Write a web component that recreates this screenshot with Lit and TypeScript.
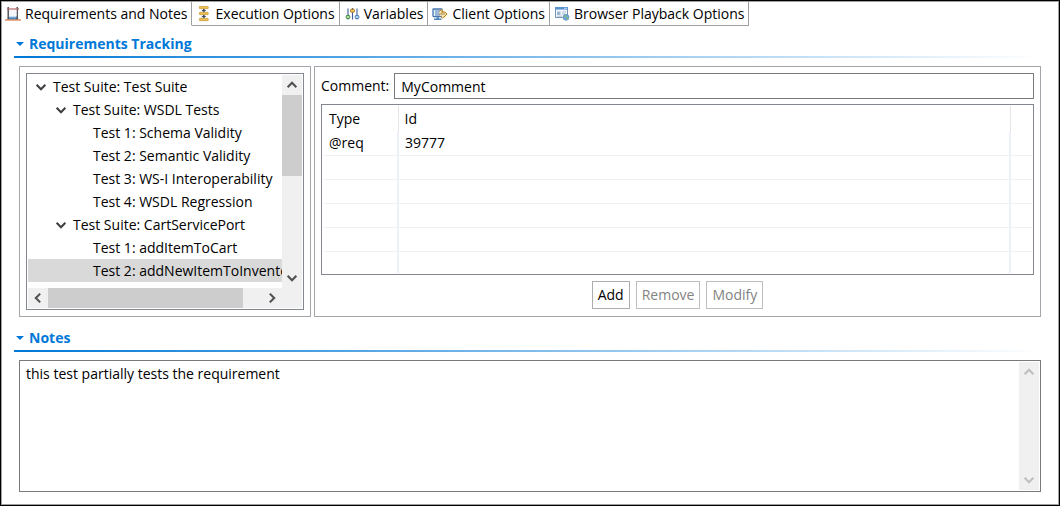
import { LitElement, html, css, svg } from "lit";
import { customElement, property, state } from "lit/decorators.js";
import { classMap } from "lit/directives/class-map.js";

const icons = {
  requirements: svg`
    <path d="M1.5 13.5l3-3h7l3 3z" fill="#8fbce4"/><path d="M4 11.5h8v2H4z" fill="#4f86c0"/>
    <path d="M3.2 1v12.5M12.2 1v12.5" stroke="#4b4650" stroke-width="1.4"/>
    <path d="M4 4h7.500v6H4z" fill="#f4f6fa"/>
    <path d="M2 3h12" stroke="#a9666a" stroke-width="1.3"/><path d="M4.500 3h7" stroke="#e8b0b0" stroke-width="1.3" stroke-dasharray="1 1"/>
    <path d="M0 14h16" stroke="#d9763a" stroke-width="1.2"/>`,
  execution: svg`
    <g fill="#f0c050" stroke="#b98a2a" stroke-width=".6"><rect x="3.300" y="0.300" width="9" height="2.400" rx=".8"/><rect x="3.300" y="6.300" width="9" height="2.400" rx=".8"/><rect x="3.300" y="12.300" width="9" height="2.400" rx=".8"/></g>
    <path d="M7 3h1.600v1h1.700L7.800 6.300 5.300 4H7zM7 9h1.600v1h1.700L7.800 12.300 5.300 10H7z" fill="#3d4d66"/>`,
  variables: svg`
    <path d="M4 2.5v11M8.500 2v11.500M13 2.500v11" stroke="#3c5f9c" stroke-width="1.100"/>
    <rect x="2.200" y="9.500" width="3.600" height="3" rx="1" fill="#b5dfa0" stroke="#34803c"/>
    <rect x="6.600" y="3.200" width="3.800" height="3" rx="1" fill="#f5cf70" stroke="#a96f13"/>
    <rect x="11.200" y="9.500" width="3.600" height="3" rx="1" fill="#b9d8f5" stroke="#3b70ad"/>`,
  client: svg`
    <rect x="1" y="3" width="9" height="7.600" rx=".5" fill="#dcecfa" stroke="#4676ad" stroke-width="1.300"/>
    <path d="M3 5h5M3 7h4M3 9h5" stroke="#39699f" stroke-width=".8"/><path d="M4.500 11.300h2.500v1.200H4.500zM2 12.500h7.500v1.500H2z" fill="#5085bd"/>
    <path d="M7 5.800l2.500-2 3 2 3 .5-2 1.700 2 1.700-2.500 2-3.500-.4.500-1.500-2.500-.8 1.500-1.500z" fill="#fbecc0"/>
    <path d="M7 5.500l2.500-2 1.500 2.500M9 6l4 .2 2 1.800-2.200 2M6.800 8h6M8.500 10.500l2 1.500 2.500-1.800" stroke="#b37a20" stroke-width="1"/>`,
  browser: svg`
    <rect x="1.500" y="1.500" width="12" height="10" fill="#f4f9fe" stroke="#7795b5"/>
    <path d="M1 1h13v2.600H1z" fill="#5a92cd"/><path d="M10 2.300h3" stroke="#d5e8fa" stroke-width=".8"/>
    <path d="M3 5.500h3.500v3.500H3z" fill="#9fb7cf"/><path d="M8 6h4M8 8h3M3 10.200h5" stroke="#9db1c6" stroke-width=".8"/>
    <circle cx="12" cy="11.300" r="3" fill="#6aa6dd" stroke="#5b8ab5" stroke-width=".6"/>
    <path d="M9.700 10.500l1.500-1.600 1.600.6-1 1.600-1.400.3zM12.300 11.800l1.800-.9.500 1.400-1.400 1.500z" fill="#86bd70"/>`,
};

const chevronPaths = {
  up: "M3 10.5 8 5.5l5 5",
  down: "M3 5.5l5 5 5-5",
  left: "M10.5 3l-5 5 5 5",
  right: "M5.5 3l5 5-5 5",
};
type Direction = keyof typeof chevronPaths;
const chevron = (dir: Direction) => html`<svg class="chevron" width="14" height="14" viewBox="0 0 16 16" aria-hidden="true"><path d=${chevronPaths[dir]} fill="none" stroke="currentColor" stroke-width="2.4"/></svg>`;

const base = css`
  * { box-sizing: border-box; }
  button, input, textarea { font: inherit; color: inherit; margin: 0; border-radius: 0; }
  svg { display: block; flex: none; }
`;

@customElement("scroll-bar")
class ScrollBar extends LitElement {
  @property({ type: Boolean, reflect: true }) horizontal = false;
  @property({ type: Boolean, reflect: true }) disabled = false;
  @property({ type: Number }) thumb = 0;
  static styles = [base, css`
    :host { display: flex; flex-direction: column; width: 20px; background: #f0f0f0; color: #505050; }
    :host([horizontal]) { flex-direction: row; width: auto; height: 20px; padding-right: 20px; }
    :host([disabled]) { color: #bfbfbf; }
    button { flex: none; width: 20px; height: 20px; padding: 0; border: 0; background: none; display: grid; place-items: center; }
    .track { flex: 1; display: flex; flex-direction: inherit; }
    .thumb { background: #cdcdcd; }
  `];
  render() {
    const [a, b]: Direction[] = this.horizontal ? ["left", "right"] : ["up", "down"];
    return html`
      <button aria-label="Scroll ${a}" ?disabled=${this.disabled}>${chevron(a)}</button>
      <div class="track"><div class="thumb" style="flex-basis:${this.thumb}%"></div></div>
      <button aria-label="Scroll ${b}" ?disabled=${this.disabled}>${chevron(b)}</button>`;
  }
}

@customElement("form-section")
class FormSection extends LitElement {
  @property() heading = "";
  @state() open = true;
  static styles = [base, css`
    :host { display: flex; flex-direction: column; }
    h2 { margin: 0; font-size: 14px; line-height: 24px; }
    h2 button { display: flex; align-items: center; gap: 5px; padding: 0 0 0 2px; border: 0; background: none; color: #0078d7; font-weight: 700; }
    .rule { height: 2px; background: linear-gradient(90deg, #0078d7, #fff); }
    .body { flex: 1; display: flex; flex-direction: column; padding: 8px 2px 0 5px; }
  `];
  render() {
    return html`
      <h2><button aria-expanded=${this.open} @click=${() => (this.open = !this.open)}>
        <svg width="8" height="8" viewBox="0 0 8 8" aria-hidden="true"><path d="M0 2h8L4 6z" fill="currentColor"/></svg>${this.heading}</button></h2>
      <div class="rule"></div>
      ${this.open ? html`<div class="body"><slot></slot></div>` : ""}`;
  }
}

@customElement("app-root")
class AppRoot extends LitElement {
  @state() tab = 0;
  @state() selected = 8;

  tabs = [
    { label: "Requirements and Notes", icon: icons.requirements },
    { label: "Execution Options", icon: icons.execution },
    { label: "Variables", icon: icons.variables },
    { label: "Client Options", icon: icons.client },
    { label: "Browser Playback Options", icon: icons.browser },
  ];
  nodes = [
    { level: 1, label: "Test Suite: Test Suite", group: true },
    { level: 2, label: "Test Suite: WSDL Tests", group: true },
    { level: 3, label: "Test 1: Schema Validity" },
    { level: 3, label: "Test 2: Semantic Validity" },
    { level: 3, label: "Test 3: WS-I Interoperability" },
    { level: 3, label: "Test 4: WSDL Regression" },
    { level: 2, label: "Test Suite: CartServicePort", group: true },
    { level: 3, label: "Test 1: addItemToCart" },
    { level: 3, label: "Test 2: addNewItemToInventory" },
  ];
  rows = [["@req", "39777"], ["", ""], ["", ""], ["", ""], ["", ""], ["", ""]];

  static styles = [base, css`
    :host { display: flex; flex-direction: column; box-sizing: border-box; min-height: 100vh; background: #fff; color: #000;
      border: 1px solid #000; font: 14px/20px "Open Sans", "Noto Sans", sans-serif; }
    .frame { flex: 1; display: flex; flex-direction: column; border: 1px solid #a0a0a0; }
    .tabs { display: flex; }
    .tab { display: flex; align-items: center; gap: 4px; height: 24px; padding: 0 3px; border: solid #a0a0a0; border-width: 0 1px 1px 0; background: #fff; white-space: nowrap; }
    .tab.active { border-bottom-color: transparent; }
    .tab + .tab { padding: 0 4px; }
    main { flex: 1; display: flex; flex-direction: column; gap: 9px; padding: 6px 15px 12px 12px; }
    .notes-section { flex: 1; }
    .tracking { display: flex; gap: 3px; }
    .panel { border: 1px solid #a5a5ab; padding: 6px; }
    .tree-panel { flex: none; width: 292px; }
    .tree-box { border: 1px solid #828790; padding: 1px; background: #fff; }
    .tree-view { display: flex; height: 213px; }
    .tree { flex: 1; min-width: 0; overflow: hidden; margin: 0; padding: 0; list-style: none; }
    .node { display: flex; align-items: center; gap: 5px; height: 23px; white-space: nowrap; }
    .node .chevron { color: #404040; }
    .level-1 { padding-left: 6px; }
    .level-2 { padding-left: 26px; }
    .level-3 { padding-left: 65px; }
    .node.selected { background: #d9d9d9; }
    .detail { flex: 1; min-width: 0; display: flex; flex-direction: column; }
    .comment { display: flex; align-items: center; gap: 5px; }
    .comment input { flex: 1; min-width: 0; height: 26px; padding: 0 6px; border: 1px solid #7a7a7a; }
    .grid { border: 1px solid #828790; padding: 1px; margin: 5px 0 6px; }
    table { width: 100%; table-layout: fixed; border-collapse: collapse; }
    th, td { height: 24px; padding: 0 6px; text-align: left; font-weight: 400; border-right: 2px solid #ebf0f9; border-bottom: 1px solid #f0f0f0; }
    th { height: 25px; border-right: 1px solid #e5e5e5; border-bottom: 0; }
    tbody tr:last-child td { height: 22px; border-bottom: 0; }
    th:last-child, td:last-child { border-right: 0; }
    .type-col { width: 75px; }
    .end-col { width: 22px; }
    .actions { display: flex; justify-content: center; gap: 6px; }
    .actions button { height: 28px; padding: 0 5px; border: 1px solid #adadad; background: #fff; }
    .actions button:disabled { color: #838383; border-color: #bfbfbf; }
    .notes { flex: 1; display: flex; padding: 1px; border: 1px solid #7a7a7a; }
    .notes textarea { flex: 1; min-width: 0; padding: 2px 5px; border: 0; resize: none; overflow: hidden; outline: none; }
  `];

  render() {
    return html`<div class="frame">
      <div class="tabs" role="tablist">
        ${this.tabs.map((t, i) => html`<button role="tab" aria-selected=${i === this.tab} class=${classMap({ tab: true, active: i === this.tab })} @click=${() => (this.tab = i)}>
          <svg width="16" height="16" viewBox="0 0 16 16" fill="none" aria-hidden="true">${t.icon}</svg><span>${t.label}</span></button>`)}
      </div>
      <main>
        <form-section heading="Requirements Tracking">
          <div class="tracking">
            <div class="panel tree-panel"><div class="tree-box">
              <div class="tree-view">
                <ul class="tree" role="tree">
                  ${this.nodes.map((n, i) => html`<li role="treeitem" aria-level=${n.level} aria-selected=${i === this.selected}
                    class=${classMap({ node: true, [`level-${n.level}`]: true, selected: i === this.selected })} @click=${() => (this.selected = i)}>${n.group ? chevron("down") : ""}<span>${n.label}</span></li>`)}
                </ul>
                <scroll-bar thumb="47"></scroll-bar>
              </div>
              <scroll-bar horizontal thumb="91"></scroll-bar>
            </div></div>
            <div class="panel detail">
              <div class="comment"><label for="comment">Comment:</label><input id="comment" type="text" .value=${"MyComment"}></div>
              <div class="grid"><table>
                <colgroup><col class="type-col"><col><col class="end-col"></colgroup>
                <thead><tr><th scope="col">Type</th><th scope="col">Id</th><th></th></tr></thead>
                <tbody>${this.rows.map((r) => html`<tr><td>${r[0]}</td><td>${r[1]}</td><td></td></tr>`)}</tbody>
              </table></div>
              <div class="actions"><button>Add</button><button disabled>Remove</button><button disabled>Modify</button></div>
            </div>
          </div>
        </form-section>
        <form-section class="notes-section" heading="Notes">
          <div class="notes"><textarea aria-label="Notes" .value=${"this test partially tests the requirement"}></textarea><scroll-bar disabled></scroll-bar></div>
        </form-section>
      </main>
    </div>`;
  }
}
